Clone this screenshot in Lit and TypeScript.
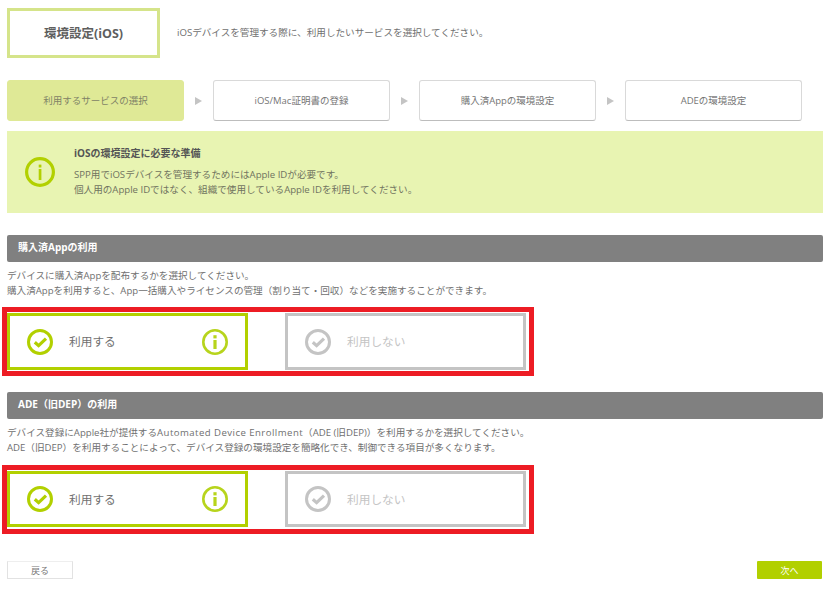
import { LitElement, html, css, svg } from "lit";
import { customElement } from "lit/decorators.js";

const lime = "#b2d000";

const infoIcon = html`<svg class="i" width="26" height="26" viewBox="0 0 26 26" aria-hidden="true">
  <circle cx="13" cy="13" r="11.7" fill="none" stroke="#b7d41c" stroke-width="2.6"></circle>
  <rect x="11.4" y="6.2" width="3.2" height="3.2" fill="#b7d41c"></rect>
  <rect x="11.4" y="11" width="3.2" height="9" fill="#b7d41c"></rect>
</svg>`;

const noticeIcon = html`<svg width="30" height="30" viewBox="0 0 30 30" aria-hidden="true">
  <circle cx="15" cy="15" r="13.4" fill="none" stroke=${lime} stroke-width="3.2"></circle>
  <rect x="13.7" y="7.6" width="2.7" height="2.9" fill=${lime}></rect>
  <rect x="13.7" y="12" width="2.7" height="11" fill=${lime}></rect>
</svg>`;

const checkIcon = (color: string) => html`<svg width="26" height="26" viewBox="0 0 26 26" aria-hidden="true">
  <circle cx="13" cy="13" r="11.5" fill="none" stroke=${color} stroke-width="3"></circle>
  ${svg`<path d="M7.8 13.2 L11.6 16.6 L19 9.6" fill="none" stroke=${color} stroke-width="3.2"></path>`}
</svg>`;

@customElement("app-root")
export class AppRoot extends LitElement {
  static styles = css`
    :host {
      display: block;
      box-sizing: border-box;
      width: 827px;
      height: 589px;
      padding: 8px 4px 0 7px;
      background: #fff;
      color: #666;
      font-family: "Open Sans", "Noto Sans CJK JP", sans-serif;
      font-size: 9.6px;
      line-height: 15px;
      overflow: hidden;
    }
    .head { display: flex; align-items: center; gap: 17px; height: 50px; margin-bottom: 22px; }
    .title {
      box-sizing: border-box; width: 153px; height: 50px;
      border: 3px solid #d5e48a; display: flex; align-items: center; justify-content: center;
      font-size: 12.5px; font-weight: 700; color: #5f5f5f;
    }
    .desc { position: relative; top: -1px; color: #707070; }
    .steps { display: flex; align-items: stretch; margin-bottom: 10px; width: 795px; }
    .step {
      box-sizing: border-box; width: 177px; height: 41px; border: 1px solid #d9d9d9; border-bottom-color: #bdbdbd;
      border-radius: 3px; display: flex; align-items: center; justify-content: center; color: #757575;
      font-size: 9.5px;
    }
    .step.on { background: #dfe996; border-color: #dfe996; color: #7f8366; }
    .sep { width: 29px; display: flex; align-items: center; justify-content: center; }
    .tri { width: 0; height: 0; border-left: 7px solid #c4c4c4; border-top: 4px solid transparent; border-bottom: 4px solid transparent; margin: 0 1px; }
    .notice {
      box-sizing: border-box; height: 82px; background: #e8f4b2; display: flex; align-items: flex-start;
      padding: 15px 0 0 18px; margin-bottom: 22px;
    }
    .notice svg { margin: 11px 19px 0 0; flex: none; }
    .notice h3 { margin: 0 0 6px; font-size: 10px; font-weight: 700; line-height: 15px; color: #555; }
    .notice p { margin: 0; color: #70735f; }
    .bar {
      box-sizing: border-box; height: 27px; background: #808080; border-radius: 2px; color: #fff;
      font-size: 10px; font-weight: 700; display: flex; align-items: center; padding: 0 0 2px 11px; margin-bottom: 6px;
    }
    .lead { margin: 0 0 9px; color: #707070; }
    .lead.second { margin-bottom: 10px; }
    .wide { letter-spacing: 0.45px; }
    .frame {
      box-sizing: border-box; width: 532px; height: 69px; margin-left: -5px; border: 5px solid #ed1c24;
      padding: 1px 0 0 0; display: flex; align-items: flex-start; gap: 37px; margin-bottom: 16px;
    }
    .opt {
      box-sizing: border-box; width: 241px; height: 57px; border: 3px solid #b2d000;
      display: flex; align-items: center; padding-left: 17px; font-size: 11.7px; color: #707070;
    }
    .frame.short .opt { height: 56px; }
    .opt.off { border-color: #c4c4c4; color: #c4c4c4; }
    .opt span { margin-left: 16px; flex: 1; }
    .opt .i { margin-right: 17px; }
    .foot { display: flex; justify-content: space-between; margin-top: 27px; padding-right: 1px; }
    .btn {
      box-sizing: border-box; width: 66px; height: 18px; display: flex; align-items: center; justify-content: center;
      font-size: 9px; border: 1px solid #e2e2e2; border-top-color: #eee; color: #777;
    }
    .btn.next { width: 65px; background: #b2d000; border: 0; color: #fff; border-radius: 1px; }
  `;

  private option(info: boolean, off: boolean, label: string) {
    return html`<div class="opt ${off ? "off" : ""}">
      ${checkIcon(off ? "#c4c4c4" : lime)}
      <span>${label}</span>
      ${info ? infoIcon : ""}
    </div>`;
  }

  private frame(short = false) {
    return html`<div class="frame ${short ? "short" : ""}">
      ${this.option(true, false, "利用する")}
      ${this.option(false, true, "利用しない")}
    </div>`;
  }

  render() {
    const steps = ["iOS/Mac証明書の登録", "購入済Appの環境設定", "ADEの環境設定"];
    return html`
      <div class="head">
        <div class="title">環境設定(iOS)</div>
        <div class="desc">iOSデバイスを管理する際に、利用したいサービスを選択してください。</div>
      </div>
      <div class="steps">
        <div class="step on">利用するサービスの選択</div>
        ${steps.map((s) => html`<div class="sep"><i class="tri"></i></div><div class="step">${s}</div>`)}
      </div>
      <div class="notice">
        ${noticeIcon}
        <div>
          <h3>iOSの環境設定に必要な準備</h3>
          <p>SPP用でiOSデバイスを管理するためにはApple IDが必要です。<br />個人用のApple IDではなく、組織で使用しているApple IDを利用してください。</p>
        </div>
      </div>
      <div class="bar">購入済Appの利用</div>
      <p class="lead">デバイスに購入済Appを配布するかを選択してください。<br />購入済Appを利用すると、App一括購入やライセンスの管理（割り当て・回収）などを実施することができます。</p>
      ${this.frame()}
      <div class="bar">ADE（旧DEP）の利用</div>
      <p class="lead second">デバイス登録にApple社が提供する<span class="wide">Automated Device Enrollment</span>（ADE (旧DEP)）を利用するかを選択してください。<br />ADE（旧DEP）を利用することによって、デバイス登録の環境設定を簡略化でき、制御できる項目が多くなります。</p>
      ${this.frame(true)}
      <div class="foot">
        <div class="btn">戻る</div>
        <div class="btn next">次へ</div>
      </div>
    `;
  }
}
